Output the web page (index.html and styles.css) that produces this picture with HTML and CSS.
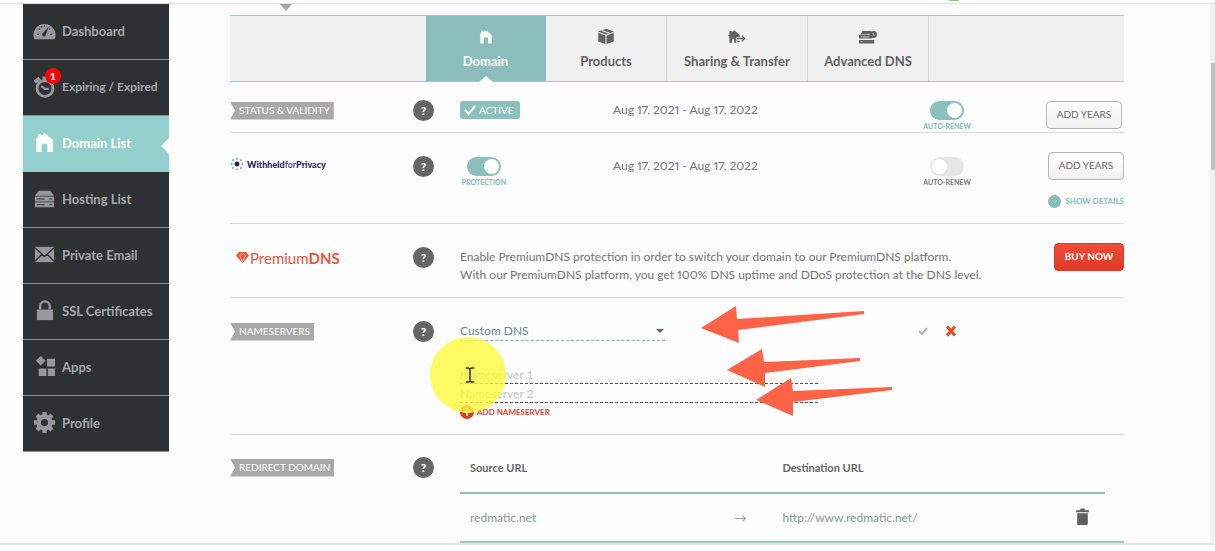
FILE: index.html
```html
<!DOCTYPE html>
<html lang="en">
<head>
    <meta charset="UTF-8">
    <meta name="viewport" content="width=device-width, initial-scale=1.0">
    <title>Domain List</title>
    <link rel="stylesheet" href="styles.css">
</head>
<body>
    <div class="topbar"><span class="status-dot"></span></div>
    <div class="page">
        <nav class="sidebar">
            <a href="#">
                <svg viewBox="0 0 24 24"><path fill="currentColor" d="M1 20a11.500 11.500 0 1 1 22 0q0 1-1 1H2q-1 0-1-1z"/><path stroke="#2e3032" stroke-width="1.300" d="M4 16h2M6 10l1 1M12 6v2M18 10l-1 1M18 16h2M8.500 7.500l.5 1.500"/><path fill="#2e3032" d="M16.500 8l-3 8a2 2 0 1 1-3-1.500z"/></svg>
                <span>Dashboard</span>
            </a>
            <a href="#">
                <svg viewBox="0 0 24 24" fill="none" stroke="currentColor"><circle cx="12.500" cy="14" r="8.300" stroke-width="3"/><path stroke-width="2.200" d="M8.500 11.500l4 3h4"/><path stroke-width="4" d="M2 7.500l5-4M10 3.500h5"/></svg>
                <span class="regular">Expiring / Expired</span>
                <b class="count">1</b>
            </a>
            <a href="#" class="active">
                <svg viewBox="0 0 24 24"><path fill="currentColor" d="M12 2l9 7v13H15v-7q0-2-3-2t-3 2v7H3.500V10L2 9l3-2V3h3v2z"/></svg>
                <span>Domain List</span>
            </a>
            <a href="#">
                <svg viewBox="0 0 24 24"><path fill="currentColor" d="M6 4h12l4 5H2zM2 10h20v5H2zM2 16h20v5H2z"/><path stroke="#2e3032" d="M4 12.500h8M17 12.500h3M4 18.500h8M17 18.500h3"/></svg>
                <span>Hosting List</span>
            </a>
            <a href="#">
                <svg viewBox="0 0 24 24"><path fill="currentColor" d="M2 4h20v16H2z"/><path fill="none" stroke="#2e3032" stroke-width="1.500" d="M2 5l10 9 10-9M2 19l7.500-7.500M22 19l-7.500-7.500"/></svg>
                <span>Private Email</span>
            </a>
            <a href="#">
                <svg viewBox="0 0 24 24"><path fill="currentColor" d="M4 11h17v11H4z"/><path fill="none" stroke="currentColor" stroke-width="2.500" d="M7.500 11V7.500a5 5 0 0 1 10 0V11"/></svg>
                <span>SSL Certificates</span>
            </a>
            <a href="#">
                <svg viewBox="0 0 24 24"><path fill="currentColor" d="M8 1l5 5-5 5-5-5zM14.500 4H23v8h-8.500zM6 14h8v8H6zM15.500 14H23v8h-7.500z"/></svg>
                <span>Apps</span>
            </a>
            <a href="#">
                <svg viewBox="0 0 24 24"><circle cx="12" cy="12" r="6" fill="none" stroke="currentColor" stroke-width="5"/><path stroke="currentColor" stroke-width="4.500" d="M12 1v4M12 19v4M1 12h4M19 12h4M4.200 4.200l3 3M16.800 16.800l3 3M4.200 19.800l3-3M16.800 7.200l3-3"/><circle cx="12" cy="12" r="3.500" fill="#2e3032"/></svg>
                <span>Profile</span>
            </a>
        </nav>

        <main>
            <div class="pointer"></div>
            <div class="tabs">
                <a href="#" class="active">
                    <svg viewBox="0 0 24 24"><path fill="currentColor" d="M12 3l8 7v12H15v-7q0-2-3-2t-3 2v7H4V11l-1-1 2-2V4h3v2z"/></svg>
                    Domain
                </a>
                <a href="#">
                    <svg viewBox="0 0 24 24"><path fill="currentColor" d="M12 1l11 4v14l-11 4-11-4V5z"/><path fill="none" stroke="#f0f0f0" stroke-width="1.500" d="M1 6l11 4 11-4M12 10v13M6 3.500l11 4"/></svg>
                    Products
                </a>
                <a href="#" class="wide">
                    <svg viewBox="0 0 26 24"><path fill="currentColor" d="M9 3l8 7v3h-5v8h-3v-5q-2-2-3 0v5H2v-9L0 11l2-2V4h3v2z"/><path fill="none" stroke="currentColor" stroke-width="2" d="M13 15h11M20 11l4 4-4 4M13 19h4"/></svg>
                    Sharing &amp; Transfer
                </a>
                <a href="#">
                    <svg viewBox="0 0 26 24"><path fill="currentColor" d="M5 4h13l2 5H2zM0 10h19v5H0zM0 17h22v5H0z"/><circle cx="21" cy="9" r="5" fill="currentColor"/><path stroke="#f0f0f0" d="M3 12.500h12M3 19.500h2M20 7l2 4"/></svg>
                    Advanced DNS
                </a>
            </div>

            <section class="row status">
                <div class="label"><span class="tag">STATUS &amp; VALIDITY</span></div>
                <button class="help" aria-label="Help">?</button>
                <div class="cols">
                    <div><span class="badge"><svg viewBox="0 0 12 12"><path fill="none" stroke="currentColor" stroke-width="2" d="M1 6l3.500 4L11 2"/></svg>ACTIVE</span></div>
                    <div class="date">Aug 17, 2021 - Aug 17, 2022</div>
                    <label class="toggle"><input type="checkbox" checked>AUTO-RENEW</label>
                    <div class="actions"><button class="btn">ADD YEARS</button></div>
                </div>
            </section>

            <section class="row privacy">
                <div class="label">
                    <span class="wfp"><svg viewBox="0 0 16 16"><circle cx="8" cy="8" r="2.800" fill="#26215f"/><g fill="#4a93c8"><circle cx="8" cy="2" r="1"/><circle cx="8" cy="14" r="1"/><circle cx="2" cy="8" r="1"/><circle cx="14" cy="8" r="1"/><circle cx="3.500" cy="3.500" r="1"/><circle cx="12.500" cy="3.500" r="1"/><circle cx="3.500" cy="12.500" r="1"/><circle cx="12.500" cy="12.500" r="1"/></g></svg><span><b>Withheld</b>for<b>Privacy</b></span></span>
                </div>
                <button class="help" aria-label="Help">?</button>
                <div class="cols">
                    <label class="toggle"><input type="checkbox" checked>PROTECTION</label>
                    <div class="date">Aug 17, 2021 - Aug 17, 2022</div>
                    <label class="toggle"><input type="checkbox">AUTO-RENEW</label>
                    <div class="actions">
                        <button class="btn">ADD YEARS</button>
                        <a href="#" class="details"><svg viewBox="0 0 14 14"><circle cx="7" cy="7" r="7" fill="currentColor"/><path fill="none" stroke="#fff" d="M5 6l2 2 2-2"/></svg>SHOW DETAILS</a>
                    </div>
                </div>
            </section>

            <section class="row premium">
                <div class="label">
                    <span class="pdns"><svg viewBox="0 0 14 14"><path fill="currentColor" d="M3 1h8l3 4-7 8-7-8z"/><path fill="none" stroke="#fbd5c8" stroke-width="0.800" d="M4 5l3 7 3-7M4 5l3-3 3 3"/></svg><span>Premium<b>DNS</b></span></span>
                </div>
                <button class="help" aria-label="Help">?</button>
                <div class="promo">
                    <p>Enable PremiumDNS protection in order to switch your domain to our PremiumDNS platform.<br>With our PremiumDNS platform, you get 100% DNS uptime and DDoS protection at the DNS level.</p>
                    <button class="btn buy">BUY NOW</button>
                </div>
            </section>

            <section class="row nameservers">
                <div class="label"><span class="tag">NAMESERVERS</span></div>
                <button class="help" aria-label="Help">?</button>
                <div class="dns">
                    <div class="dns-head">
                        <div class="select">
                            <select aria-label="Nameserver type"><option>Custom DNS</option></select>
                        </div>
                        <div class="confirm">
                            <button aria-label="Save"><svg viewBox="0 0 12 12"><path fill="none" stroke="#9dbfb4" stroke-width="2" d="M2 6l3 3 5-6"/></svg></button>
                            <button aria-label="Cancel"><svg viewBox="0 0 12 12"><path fill="none" stroke="#e0501c" stroke-width="3" d="M2 1.500l8 9M10 1.500l-8 9"/></svg></button>
                        </div>
                    </div>
                    <input type="text" placeholder="Nameserver 1" aria-label="Nameserver 1">
                    <input type="text" placeholder="Nameserver 2" aria-label="Nameserver 2">
                    <button class="add"><svg viewBox="0 0 14 14"><circle cx="7" cy="7" r="7" fill="#dc3d25"/><path stroke="#ffd9a0" stroke-width="2" d="M7 3v8M3 7h8"/></svg>ADD NAMESERVER</button>
                </div>
                <!-- pointer highlight and arrows over the form -->
                <svg class="overlay" viewBox="0 0 470 137">
                    <circle class="spot" cx="38" cy="77" r="38"/>
                    <path fill="none" stroke="#333" stroke-width="1.500" d="M36 70h2.500l1.500 1 1.500-1H44M40 71v12M36 84h2.500l1.500-1 1.500 1H44"/>
                    <path fill="#ff6347" d="M271 30l35-22 1 13 127-8v3L308 32l1 13zM297 72l35-21 2 13 96-4v3l-95 12v14zM326 102l35-22 2 13 99-4v3L363 104v14z"/>
                </svg>
            </section>

            <section class="row redirect">
                <div class="label"><span class="tag">REDIRECT DOMAIN</span></div>
                <button class="help" aria-label="Help">?</button>
                <div class="redirects">
                    <table>
                        <thead>
                            <tr><th class="source">Source URL</th><th class="arrow"></th><th>Destination URL</th><th class="remove"></th></tr>
                        </thead>
                        <tbody>
                            <tr>
                                <td>redmatic.net</td>
                                <td class="arrow">→</td>
                                <td>http://www.redmatic.net/</td>
                                <td class="remove"><button aria-label="Delete"><svg viewBox="0 0 12 16"><path fill="currentColor" d="M0 2h3.500l1-1.500h3L8.500 2H12v2H0zM1 5h10v10q0 1-1 1H2q-1 0-1-1z"/></svg></button></td>
                            </tr>
                        </tbody>
                    </table>
                </div>
            </section>
        </main>

        <div class="scrollbar"><div class="thumb"></div></div>
    </div>
</body>
</html>
```
FILE: styles.css
```css
* {
    box-sizing: border-box;
}
body {
    font-family: Lato, sans-serif;
    font-size: 12px;
    color: #747474;
    margin: 0;
    background-color: #fff;
}
button, input, select {
    font-family: inherit;
    color: inherit;
}
button {
    border: none;
    background: none;
    padding: 0;
    cursor: pointer;
}
a {
    text-decoration: none;
    color: inherit;
}
svg {
    display: block;
    flex: none;
}
.topbar {
    height: 4px;
    border-bottom: 1px solid #dedee4;
    padding-right: 256px;
    display: flex;
    justify-content: flex-end;
    overflow: hidden;
}
.status-dot {
    width: 10px;
    height: 1px;
    background-color: #8fcb7c;
}
.page {
    display: flex;
    background-color: #fdfdfd;
    border-bottom: 2px solid #e6e6e6;
}

/* sidebar */
.sidebar {
    width: 146px;
    margin-left: 23px;
    flex: none;
}
.sidebar a {
    display: flex;
    align-items: center;
    gap: 6px;
    height: 56px;
    padding: 0 0 2px 10px;
    background-color: #2e3032;
    border-bottom: 1px solid #8b8c8e;
    color: #a8a8a9;
    font-size: 13px;
    font-weight: bold;
    position: relative;
}
.sidebar svg {
    width: 23px;
    height: 23px;
    color: #97989a;
}
.sidebar .regular {
    font-size: 12px;
}
.sidebar a.active {
    background-color: #93cfcd;
    border-color: #93cfcd;
    color: #fff;
}
.sidebar a.active svg {
    color: #fff;
}
.sidebar a.active::after {
    content: "";
    position: absolute;
    right: 0;
    top: 22px;
    border: 8px solid transparent;
    border-left: none;
    border-right-color: #fff;
}
.count {
    position: absolute;
    left: 22px;
    top: 8px;
    width: 16px;
    height: 16px;
    border-radius: 50%;
    background-color: #f30808;
    color: #fff;
    font-size: 10px;
    line-height: 16px;
    text-align: center;
}

/* main column */
main {
    flex: 1;
    min-width: 0;
    margin: 0 86px 0 61px;
}
.pointer {
    width: 12px;
    height: 7px;
    margin: 0 0 4px 50px;
    background-color: #a5a5a5;
    clip-path: polygon(0 0, 100% 0, 50% 100%);
}
.tabs {
    display: flex;
    height: 67px;
    padding-left: 196px;
    background-color: #f0f0f0;
    border-top: 1px solid #9cc9c4;
    border-bottom: 1px solid #9cc9c4;
}
.tabs a {
    width: 121px;
    display: flex;
    flex-direction: column;
    align-items: center;
    gap: 7px;
    padding-top: 12px;
    border-right: 1px solid #d6d6d9;
    color: #626262;
    font-size: 13px;
    line-height: 18px;
    font-weight: bold;
    position: relative;
}
.tabs a.wide {
    width: 141px;
}
.tabs svg {
    width: 18px;
    height: 17px;
}
.tabs a.active {
    width: 120px;
    background-color: #8bbdbc;
    border-color: #8bbdbc;
    color: #fff;
}
.tabs a.active::after {
    content: "";
    position: absolute;
    bottom: -1px;
    border: 7px solid transparent;
    border-top: none;
    border-bottom: 6px solid #fff;
}

/* rows */
.row {
    display: grid;
    grid-template-columns: 183px 47px 1fr;
    align-items: start;
    border-bottom: 1px solid #dbdbdb;
    position: relative;
}
.label {
    height: 21px;
    display: flex;
    align-items: center;
}
.tag {
    height: 18px;
    line-height: 16px;
    padding: 0 4px 0 9px;
    font-size: 10px;
    color: #fff;
    background-color: #a9a9a9;
    clip-path: polygon(0 0, 100% 0, 100% 100%, 0 100%, 5px 50%);
}
.help {
    width: 21px;
    height: 21px;
    border-radius: 50%;
    background-color: #666;
    color: #fff;
    font-size: 12px;
    font-weight: 900;
}
.status {
    height: 51px;
    padding-top: 18px;
}
.privacy {
    height: 91px;
    padding-top: 23px;
}
.premium {
    height: 74px;
    padding-top: 23px;
}
.nameservers {
    height: 137px;
    padding-top: 23px;
}
.redirect {
    padding-top: 22px;
    border-bottom: none;
}
.cols {
    display: grid;
    grid-template-columns: 153px 1fr 50px 151px;
    align-items: start;
}
.date {
    line-height: 20px;
    font-variant-numeric: proportional-nums;
}
.badge {
    display: inline-flex;
    align-items: center;
    gap: 3px;
    height: 18px;
    margin-top: 1px;
    padding: 0 6px 0 4px;
    border-radius: 3px;
    background-color: #8bc1bd;
    color: #fff;
    font-size: 10px;
}
.badge svg {
    width: 12px;
    height: 12px;
}
.toggle {
    display: flex;
    flex-direction: column;
    align-items: center;
    width: 48px;
    gap: 2px;
    font-size: 7px;
    line-height: 9px;
    font-weight: bold;
    color: #777;
    white-space: nowrap;
}
.toggle:has(input:checked) {
    color: #81b9b2;
}
.toggle input {
    appearance: none;
    width: 34px;
    height: 19px;
    margin: 1px 0 0;
    padding: 2px;
    border-radius: 10px;
    background-color: #e6e6e6;
    display: flex;
}
.toggle input::before {
    content: "";
    width: 15px;
    height: 15px;
    border-radius: 50%;
    background-color: #fff;
}
.toggle input:checked {
    background-color: #8bc0bb;
    justify-content: flex-end;
}
.actions {
    display: flex;
    flex-direction: column;
    align-items: flex-end;
    gap: 15px;
}
.btn {
    width: 76px;
    height: 28px;
    padding-bottom: 2px;
    border: 1px solid #b5b5b5;
    border-radius: 4px;
    background: linear-gradient(#fff, #f1f1f1);
    color: #686868;
    font-size: 10px;
}
.status .actions {
    padding-right: 2px;
}
.status .btn {
    margin-top: 1px;
}
.privacy .btn {
    margin-top: -4px;
}
.details {
    display: flex;
    align-items: center;
    gap: 4px;
    color: #86bfb6;
    font-size: 8px;
    line-height: 13px;
    font-weight: bold;
}
.details svg {
    width: 13px;
    height: 13px;
}
.wfp {
    display: flex;
    align-items: center;
    gap: 3px;
    margin-bottom: 5px;
    color: #2a2560;
    font-size: 9px;
}
.wfp b {
    font-weight: 900;
}
.wfp svg {
    width: 14px;
    height: 14px;
}
.pdns {
    display: flex;
    align-items: center;
    gap: 1px;
    padding-left: 6px;
    color: #e8553a;
    font-size: 15px;
}
.pdns svg {
    width: 13px;
    height: 13px;
}
.promo {
    display: flex;
    justify-content: space-between;
    align-items: flex-start;
}
.promo p {
    margin: 1px 0 0;
    line-height: 18px;
    white-space: nowrap;
    font-variant-numeric: proportional-nums;
}
.btn.buy {
    width: 70px;
    margin-top: -4px;
    border-color: #d93c29;
    background: linear-gradient(#f04c35, #de3b28);
    color: #fff;
    font-weight: bold;
}

/* nameserver form */
.dns {
    display: flex;
    flex-direction: column;
    align-items: flex-start;
}
.dns-head {
    display: flex;
    justify-content: space-between;
    align-items: flex-start;
    width: 100%;
    margin-bottom: 24px;
}
.select {
    width: 205px;
    position: relative;
}
.select::after {
    content: "";
    position: absolute;
    right: 1px;
    top: 8px;
    border: 4px solid transparent;
    border-top-color: #56696d;
    border-bottom: none;
}
.select select {
    appearance: none;
    width: 100%;
    height: 20px;
    border: none;
    border-bottom: 1px dashed #8fb1b3;
    border-radius: 0;
    background: none;
    font-size: 12px;
    color: #6b8690;
    padding: 0;
}
.confirm {
    display: flex;
    gap: 16px;
    padding: 4px 167px 0 0;
}
.confirm svg {
    width: 12px;
    height: 12px;
}
.dns input {
    width: 358px;
    height: 19px;
    padding: 0;
    border: none;
    border-bottom: 1px dashed #4f4f4f;
    background: none;
    font-size: 12px;
}
.dns input::placeholder {
    color: #c4c4c4;
}
.add {
    display: flex;
    align-items: center;
    gap: 3px;
    margin-top: 2px;
    color: #cf4837;
    font-size: 8px;
    font-weight: bold;
}
.add svg {
    width: 14px;
    height: 14px;
}
.overlay {
    position: absolute;
    left: 200px;
    top: 0;
    width: 470px;
    height: 137px;
    pointer-events: none;
}
.spot {
    fill: #fdf93c;
    fill-opacity: 0.8;
}

/* redirects */
.redirects {
    border-bottom: 2px solid #9fcbbf;
}
table {
    width: calc(100% - 19px);
    border-collapse: collapse;
    table-layout: fixed;
}
th, td {
    height: 48px;
    padding: 0 0 0 10px;
    text-align: left;
    font-weight: normal;
    color: #8b9492;
}
th {
    height: 36px;
    padding-bottom: 15px;
    border-bottom: 2px solid #8fbfaf;
    font-size: 11px;
    font-weight: bold;
    color: #666;
}
th.source {
    width: 41%;
}
th.arrow {
    width: 48px;
}
th.remove {
    width: 39px;
}
.remove svg {
    width: 13px;
    height: 17px;
    color: #5f5f5f;
}

.scrollbar {
    width: 5px;
    flex: none;
    padding-top: 59px;
    background-color: #f1f1f1;
}
.thumb {
    width: 4px;
    height: 107px;
    margin-left: 1px;
    background-color: #c1c1c1;
}
```
